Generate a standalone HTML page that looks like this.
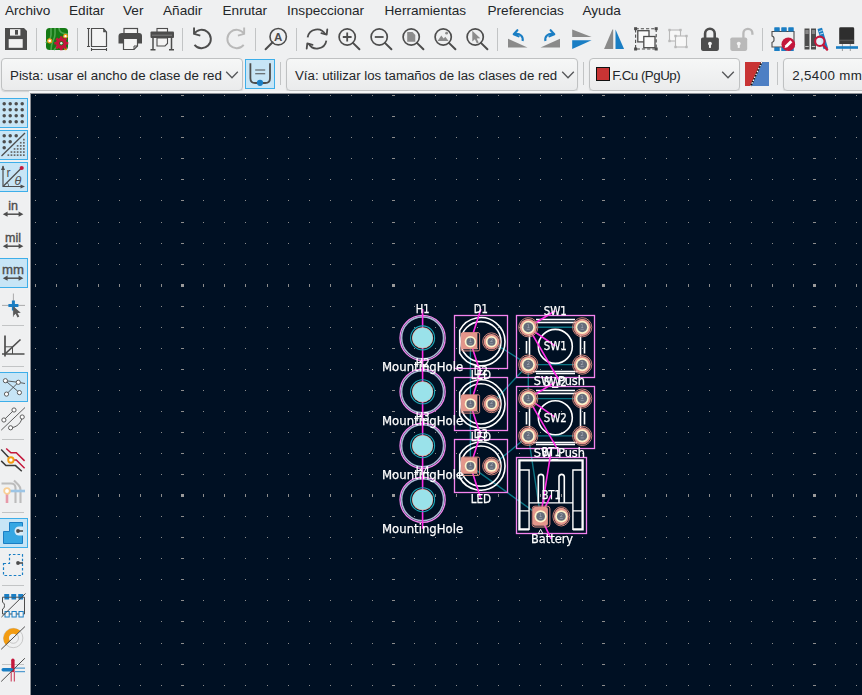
<!DOCTYPE html>
<html><head><meta charset="utf-8"><title>Editor de placas</title>
<style>

html,body{margin:0;padding:0}
body{width:862px;height:695px;overflow:hidden;background:#eff0f1;position:relative;font-family:"Liberation Sans",sans-serif;color:#232629}
#canvas{position:absolute;left:31px;top:94px;width:831px;height:601px;overflow:hidden;background:#001023}
.m{position:absolute;top:1.8px;height:18px;line-height:18px;font-size:13.6px;white-space:nowrap}
.ic{position:absolute;width:24px;height:24px;overflow:visible}
.sep{position:absolute;width:1px;background:#c2c4c5}
.hsep{position:absolute;height:1px;background:#c2c4c5;left:2px;width:22px}
.cb{position:absolute;top:58px;height:33px;box-sizing:border-box;border:1px solid #bfc1c2;border-radius:4px;background:linear-gradient(#f6f7f7,#eaebec);box-shadow:0 1px 1px rgba(0,0,0,.12);font-size:13.33px;line-height:30px;white-space:nowrap;overflow:hidden}
.cb span{position:absolute;top:1.7px}
.chev{position:absolute;top:11px;width:14px;height:10px}
.tg{position:absolute;box-sizing:border-box;border:1px solid #3daee9;background:#c7e5f6}

</style></head>
<body>
<span class="m" style="left:5px">Archivo</span>
<span class="m" style="left:69px">Editar</span>
<span class="m" style="left:123px">Ver</span>
<span class="m" style="left:163px">Añadir</span>
<span class="m" style="left:222.5px">Enrutar</span>
<span class="m" style="left:287px">Inspeccionar</span>
<span class="m" style="left:384.5px">Herramientas</span>
<span class="m" style="left:487.5px">Preferencias</span>
<span class="m" style="left:582.5px">Ayuda</span>
<svg class="ic" style="left:4px;top:27px" viewBox="0 0 24 24"><path d="M1 1H20L23 4V23H1Z" fill="#4d4d4d"/><rect x="6" y="2.2" width="10.4" height="6.4" fill="#f2f2f2"/><rect x="11" y="3" width="3" height="4.7" fill="#4d4d4d"/><rect x="4.7" y="12.1" width="14" height="8.7" fill="#f2f2f2"/></svg>
<svg class="ic" style="left:45px;top:27px" viewBox="0 0 24 24"><rect x="1" y="1" width="22" height="22" rx="3.5" fill="#157a15"/><path d="M6 1v7c0 5-3 5-5 8M10 1v6c0 6-4 7-4 16M14 1c0 5 5 6 9 6M9 23l5-6" stroke="#4da64d" stroke-width="1.6" fill="none"/><circle cx="4.7" cy="13.8" r="2" fill="#fff" stroke="#f39c12" stroke-width="1.2"/><circle cx="20.5" cy="9.2" r="1.8" fill="#fff" stroke="#f39c12" stroke-width="1.2"/><circle cx="20.5" cy="22" r="1.3" fill="#f39c12"/><g transform="translate(16.3 16.3)"><circle r="4.1" fill="none" stroke="#c4173b" stroke-width="2.7"/><path d="M0-7V7M-7 0H7M-5-5L5 5M-5 5L5-5" stroke="#c4173b" stroke-width="2.6"/><circle r="2.1" fill="#157a15"/><circle r="1.2" fill="#e8f4e8"/></g></svg>
<svg class="ic" style="left:86px;top:27px" viewBox="0 0 24 24"><path d="M5.5 1.5H17.5L20.5 5V19.5H5.5Z" fill="#f4f4f4" stroke="#4d4d4d" stroke-width="1.2"/><path d="M17.2 1.5V5.2H20.5Z" fill="#4d4d4d"/><path d="M2.5 1.5V19.5M1 1.5H4M1 19.5H4M5.5 22.5H20.5M5.5 21V24M20.5 21V24" stroke="#4d4d4d" stroke-width="1.1" fill="none"/></svg>
<svg class="ic" style="left:118px;top:27px" viewBox="0 0 24 24"><rect x="6" y="1.5" width="13.5" height="6" fill="#f4f4f4" stroke="#4d4d4d" stroke-width="1.2"/><path d="M4 6H21Q24 6 24 9V16.5H0.5V9Q0.5 6 4 6Z" fill="#4d4d4d"/><path d="M5.5 11.5H19.5V19L16 22.5H5.5Z" fill="#f4f4f4" stroke="#4d4d4d" stroke-width="1.2"/><path d="M16 22.5V19H19.5" fill="none" stroke="#4d4d4d" stroke-width="1"/></svg>
<svg class="ic" style="left:150px;top:27px" viewBox="0 0 24 24"><rect x="7" y="1.5" width="10.5" height="4" fill="#f4f4f4" stroke="#4d4d4d" stroke-width="1.1"/><rect x="0.5" y="4.5" width="23.5" height="6.5" rx="1" fill="#4d4d4d"/><path d="M2 8.2H22" stroke="#8a8a8a" stroke-width="0.8"/><path d="M7 11V19H15L17.5 16.5V11Z" fill="#f4f4f4" stroke="#4d4d4d" stroke-width="1.1"/><path d="M3 11V22.5M21.5 11V22.5M0.5 22.7H5.5M19 22.7H24" stroke="#4d4d4d" stroke-width="1.5" fill="none"/></svg>
<svg class="ic" style="left:191px;top:27px" viewBox="0 0 24 24"><g><path d="M3.05 6.8A9.2 9.2 0 1 1 3.5 17.8" fill="none" stroke="#4d4d4d" stroke-width="1.9"/><path d="M3.05 0.5V6.9L9.3 8.7" fill="none" stroke="#4d4d4d" stroke-width="1.9" stroke-linejoin="miter"/></g></svg>
<svg class="ic" style="left:223px;top:27px" viewBox="0 0 24 24"><g transform="translate(24.2 0) scale(-1 1)"><path d="M3.05 6.8A9.2 9.2 0 1 1 3.5 17.8" fill="none" stroke="#b9b9b9" stroke-width="1.9"/><path d="M3.05 0.5V6.9L9.3 8.7" fill="none" stroke="#b9b9b9" stroke-width="1.9" stroke-linejoin="miter"/></g></svg>
<svg class="ic" style="left:264px;top:27px" viewBox="0 0 24 24"><circle cx="14.2" cy="9.7" r="8.2" fill="none" stroke="#4d4d4d" stroke-width="1.6"/><path d="M8.6 15.2L1.6 22.2" stroke="#4d4d4d" stroke-width="2" stroke-linecap="round"/><text x="14.2" y="13.6" text-anchor="middle" font-family="Liberation Sans,sans-serif" font-weight="bold" font-size="11.5" fill="#4d4d4d">A</text></svg>
<svg class="ic" style="left:305px;top:27px" viewBox="0 0 24 24"><path d="M2.64 10.35A9.5 9.5 0 0 1 20.4 7.5M21.36 13.65A9.5 9.5 0 0 1 3.6 16.5" fill="none" stroke="#4d4d4d" stroke-width="1.8"/><path d="M22.3 2.4L21.7 7.7L16.4 6.2M1.7 21.6L2.3 16.3L7.6 17.8" fill="none" stroke="#4d4d4d" stroke-width="1.8" stroke-linecap="round" stroke-linejoin="round"/></svg>
<svg class="ic" style="left:337px;top:27px" viewBox="0 0 24 24"><circle cx="10.2" cy="10" r="8.1" fill="none" stroke="#4d4d4d" stroke-width="1.7"/><path d="M15.9 15.9L22.4 22.3" stroke="#4d4d4d" stroke-width="2" stroke-linecap="round"/><path d="M5.8 10H14.6M10.2 5.6V14.4" stroke="#4d4d4d" stroke-width="1.8"/></svg>
<svg class="ic" style="left:369px;top:27px" viewBox="0 0 24 24"><circle cx="10.2" cy="10" r="8.1" fill="none" stroke="#4d4d4d" stroke-width="1.7"/><path d="M15.9 15.9L22.4 22.3" stroke="#4d4d4d" stroke-width="2" stroke-linecap="round"/><path d="M5.8 10H14.6" stroke="#4d4d4d" stroke-width="1.8"/></svg>
<svg class="ic" style="left:401px;top:27px" viewBox="0 0 24 24"><circle cx="10.2" cy="10" r="8.1" fill="none" stroke="#4d4d4d" stroke-width="1.7"/><path d="M15.9 15.9L22.4 22.3" stroke="#4d4d4d" stroke-width="2" stroke-linecap="round"/><path d="M6.2 5H11.5L14.3 8V14.8H6.2Z" fill="#8c8c8c"/></svg>
<svg class="ic" style="left:433px;top:27px" viewBox="0 0 24 24"><circle cx="10.2" cy="10" r="8.1" fill="none" stroke="#4d4d4d" stroke-width="1.7"/><path d="M15.9 15.9L22.4 22.3" stroke="#4d4d4d" stroke-width="2" stroke-linecap="round"/><path d="M4.5 14L8.3 8.6L10.6 11.6L12.3 9.8L15.6 14Z" fill="#8c8c8c"/><circle cx="13.6" cy="6.2" r="1.4" fill="#8c8c8c"/></svg>
<svg class="ic" style="left:465px;top:27px" viewBox="0 0 24 24"><circle cx="10.2" cy="10" r="8.1" fill="none" stroke="#4d4d4d" stroke-width="1.7"/><path d="M15.9 15.9L22.4 22.3" stroke="#4d4d4d" stroke-width="2" stroke-linecap="round"/><path d="M7.3 3.8V14.6L9.9 12.2L11.9 16.4L13.7 15.5L11.7 11.5L15.3 11.3Z" fill="#8c8c8c"/></svg>
<svg class="ic" style="left:506px;top:27px" viewBox="0 0 24 24"><path d="M2 11.7L21.5 20.6H2Z" fill="#8a8a8a"/><path d="M16.6 14C17.6 9.4 14 6.1 9 7" fill="none" stroke="#1a7ec4" stroke-width="2.1"/><path d="M11.4 3.2L7.7 7.3L12.6 9.400" fill="none" stroke="#1a7ec4" stroke-width="2.1" stroke-linecap="round" stroke-linejoin="round"/></svg>
<svg class="ic" style="left:538px;top:27px" viewBox="0 0 24 24"><path d="M22 11.7L2.5 20.6H22Z" fill="#8a8a8a"/><path d="M7.4 14C6.4 9.4 10 6.1 15 7" fill="none" stroke="#1a7ec4" stroke-width="2.1"/><path d="M12.6 3.2L16.3 7.3L11.4 9.400" fill="none" stroke="#1a7ec4" stroke-width="2.1" stroke-linecap="round" stroke-linejoin="round"/></svg>
<svg class="ic" style="left:570px;top:27px" viewBox="0 0 24 24"><path d="M2.2 2.4L21.6 10.05H2.2Z" fill="#8a8a8a"/><path d="M2.2 13.3H21.6L2.2 21.9Z" fill="#1a7ec4"/></svg>
<svg class="ic" style="left:602px;top:27px" viewBox="0 0 24 24"><path d="M10.4 2.4H11.200V21.900H2.100Z" fill="#8a8a8a"/><path d="M13.500 2.400L22.100 21.900H13.500Z" fill="#1a7ec4"/></svg>
<svg class="ic" style="left:634px;top:27px" viewBox="0 0 24 24"><rect x="1.6" y="1.7" width="20.6" height="20.3" fill="none" stroke="#4d4d4d" stroke-width="1.1" stroke-dasharray="3.2 2"/><rect x="0.1" y="0.2" width="3" height="3" fill="#4d4d4d"/><rect x="0.1" y="20.5" width="3" height="3" fill="#4d4d4d"/><rect x="20.7" y="0.2" width="3" height="3" fill="#4d4d4d"/><rect x="20.7" y="20.5" width="3" height="3" fill="#4d4d4d"/><rect x="3.8" y="3.7" width="11.2" height="11.2" fill="#fafafa" stroke="#4d4d4d" stroke-width="1.3"/><rect x="9.8" y="9.5" width="11.2" height="11.2" fill="#fafafa" stroke="#4d4d4d" stroke-width="1.3"/></svg>
<svg class="ic" style="left:666px;top:27px" viewBox="0 0 24 24"><rect x="3.5" y="3" width="11" height="11" fill="#f7f7f7" stroke="#b9b9b9" stroke-width="1.1"/><rect x="9.5" y="9" width="11" height="11" fill="#f7f7f7" stroke="#b9b9b9" stroke-width="1.1"/><rect x="2.3" y="1.8" width="2.4" height="2.4" fill="#b9b9b9"/><rect x="13.3" y="1.8" width="2.4" height="2.4" fill="#b9b9b9"/><rect x="2.3" y="12.8" width="2.4" height="2.4" fill="#b9b9b9"/><rect x="8.3" y="7.8" width="2.4" height="2.4" fill="#b9b9b9"/><rect x="19.3" y="7.8" width="2.4" height="2.4" fill="#b9b9b9"/><rect x="8.3" y="18.8" width="2.4" height="2.4" fill="#b9b9b9"/><rect x="19.3" y="18.8" width="2.4" height="2.4" fill="#b9b9b9"/></svg>
<svg class="ic" style="left:698px;top:27px" viewBox="0 0 24 24"><path d="M7.1 11V6.6A4.8 4.8 0 0 1 16.7 6.600V11" fill="none" stroke="#4d4d4d" stroke-width="2.6"/><rect x="3" y="10.5" width="17.9" height="13.4" rx="1.8" fill="#4d4d4d"/><circle cx="11.95" cy="16.6" r="1.9" fill="#f4f4f4"/><rect x="10.95" y="16.6" width="2" height="4.3" fill="#f4f4f4"/></svg>
<svg class="ic" style="left:730px;top:27px" viewBox="0 0 24 24"><path d="M13.4 11V6.3A4.500 4.500 0 0 1 22.400 6.300V7.700" fill="none" stroke="#b9b9b9" stroke-width="2.3"/><rect x="0.3" y="10.5" width="16.9" height="13.4" rx="1.8" fill="#b9b9b9"/><circle cx="8.75" cy="16.6" r="1.9" fill="#f4f4f4"/><rect x="7.75" y="16.6" width="2" height="4.3" fill="#f4f4f4"/></svg>
<svg class="ic" style="left:771px;top:27px" viewBox="0 0 24 24"><rect x="3.5" y="0.5" width="5" height="6.5" fill="#1a7ec4"/><rect x="3.5" y="17.5" width="5" height="6.5" fill="#1a7ec4"/><rect x="10.5" y="0.5" width="5" height="6.5" fill="#1a7ec4"/><rect x="10.5" y="17.5" width="5" height="6.5" fill="#1a7ec4"/><rect x="17.5" y="0.5" width="5" height="6.5" fill="#1a7ec4"/><rect x="17.5" y="17.5" width="5" height="6.5" fill="#1a7ec4"/><path d="M1 4.5H23V20H1V15.5Q3.4 14.8 3 12.2Q3.4 9.7 1 9Z" fill="#eff0f1" stroke="#4d4d4d" stroke-width="1.1"/><rect x="3.5" y="0.5" width="5" height="4" fill="#1a7ec4"/><rect x="3.5" y="20.5" width="5" height="3.5" fill="#1a7ec4"/><rect x="10.5" y="0.5" width="5" height="4" fill="#1a7ec4"/><rect x="10.5" y="20.5" width="5" height="3.5" fill="#1a7ec4"/><rect x="17.5" y="0.5" width="5" height="4" fill="#1a7ec4"/><rect x="17.5" y="20.5" width="5" height="3.5" fill="#1a7ec4"/><circle cx="17.3" cy="17.2" r="6.8" fill="#c4173b"/><path d="M13.6 21L14.3 18.2L19.3 13.2L21.4 15.3L16.4 20.3Z" fill="#fff"/></svg>
<svg class="ic" style="left:803px;top:27px" viewBox="0 0 24 24"><rect x="1.5" y="1.5" width="5" height="21" fill="#4d4d4d"/><rect x="8" y="1.5" width="5" height="21" fill="#4d4d4d"/><path d="M2.3 4H5.7M2.3 6H5.7M2.3 19.5H5.7M8.8 4H12.2M8.8 6H12.2M8.8 19.5H12.2" stroke="#cfcfcf" stroke-width="0.9"/><path d="M14.5 2L19 0.8L25 21L20.5 22.2Z" fill="#1a7ec4"/><path d="M16 4.5L19.5 3.5M16.8 7.2L20.3 6.2" stroke="#cfe6f7" stroke-width="0.9"/><circle cx="16.8" cy="14.3" r="4.7" fill="#e4f1fa" fill-opacity="0.9" stroke="#c4173b" stroke-width="2.1"/><path d="M20.3 18L24 22.4" stroke="#c4173b" stroke-width="2.6" stroke-linecap="round"/></svg>
<svg class="ic" style="left:835px;top:27px" viewBox="0 0 24 24"><path d="M5.500 0.300H17.800Q19.200 0.300 19.200 1.700V13H4.200V1.700Q4.200 0.300 5.500 0.300Z" fill="#2e2e2e"/><path d="M4.200 13H19.200V17H4.200Z" fill="#3c3c3c"/><path d="M4.200 13.200H19.200" stroke="#6a6a6a" stroke-width="0.7"/><path d="M7.400 17V24M15.300 17V24" stroke="#9a9a9a" stroke-width="1"/><rect x="1" y="19.2" width="22" height="2.600" fill="#1a7ec4"/></svg>
<div class="sep" style="left:36px;top:28px;height:23px"></div>
<div class="sep" style="left:77px;top:28px;height:23px"></div>
<div class="sep" style="left:182px;top:28px;height:23px"></div>
<div class="sep" style="left:255px;top:28px;height:23px"></div>
<div class="sep" style="left:296px;top:28px;height:23px"></div>
<div class="sep" style="left:497px;top:28px;height:23px"></div>
<div class="sep" style="left:762px;top:28px;height:23px"></div>
<div class="cb" style="left:1px;width:242px"><span style="left:8px">Pista: usar el ancho de clase de red</span><svg class="chev" style="left:223.4px" viewBox="0 0 14 10"><path d="M1.2 1.8L7 7.8L12.8 1.8" fill="none" stroke="#555759" stroke-width="1.3"/></svg></div>
<div class="tg" style="left:245px;top:59px;width:30px;height:30px"></div>
<svg class="ic" style="left:248px;top:62px" viewBox="0 0 24 24"><path d="M2.4 1.3V16.200Q2.400 21 7.200 21H17.200Q22 21 22 16.200V1.300" fill="none" stroke="#4d4d4d" stroke-width="1.8"/><path d="M7.200 8H17.200M7.200 11.800H17.200" stroke="#4d4d4d" stroke-width="1.1"/><circle cx="12" cy="20.800" r="3.1" fill="#1a7ec4"/></svg>
<div class="sep" style="left:280px;top:62px;height:23px"></div>
<div class="cb" style="left:286px;width:292px"><span style="left:8px;font-size:13.25px">Vía: utilizar los tamaños de las clases de red</span><svg class="chev" style="left:274px" viewBox="0 0 14 10"><path d="M1.2 1.8L7 7.8L12.8 1.8" fill="none" stroke="#555759" stroke-width="1.3"/></svg></div>
<div class="sep" style="left:583px;top:62px;height:23px"></div>
<div class="cb" style="left:589px;width:151px"><div style="position:absolute;left:6px;top:8px;width:12px;height:12px;border:1px solid #111;background:#c83434"></div><span style="left:22.3px;letter-spacing:-0.5px">F.Cu (PgUp)</span><svg class="chev" style="left:131px" viewBox="0 0 14 10"><path d="M1.2 1.8L7 7.8L12.8 1.8" fill="none" stroke="#555759" stroke-width="1.3"/></svg></div>
<svg class="ic" style="left:745px;top:62px" viewBox="0 0 24 24"><rect width="24" height="24" fill="#4d7fc4"/><path d="M0 0H17L6 24H0Z" fill="#c83434"/><path d="M16.8 0L5.8 24" stroke="#111" stroke-width="1.6"/><path d="M16.800 0L5.800 24" stroke="#fff" stroke-width="1.2" stroke-dasharray="1.6 1.6"/></svg>
<div class="sep" style="left:777px;top:62px;height:23px"></div>
<div class="cb" style="left:783px;width:100px"><span style="left:8.3px;letter-spacing:0.35px">2,5400 mm</span></div>
<div style="position:absolute;left:29px;top:91px;width:833px;height:2px;background:#f4f5f6"></div><div style="position:absolute;left:30px;top:93px;width:832px;height:1px;background:#8d9096"></div>
<div class="tg" style="left:-1px;top:98px;width:29px;height:30px"></div>
<div class="tg" style="left:-1px;top:130px;width:29px;height:30px"></div>
<div class="tg" style="left:-1px;top:162px;width:29px;height:30px"></div>
<div class="tg" style="left:-1px;top:258px;width:29px;height:30px"></div>
<div class="tg" style="left:-1px;top:372px;width:29px;height:30px"></div>
<div class="tg" style="left:-1px;top:518px;width:29px;height:30px"></div>
<div class="hsep" style="top:325px"></div>
<div class="hsep" style="top:366px"></div>
<div class="hsep" style="top:439px"></div>
<div class="hsep" style="top:512px"></div>
<div class="hsep" style="top:585px"></div>
<div class="hsep" style="top:664px"></div>
<svg class="ic" style="left:1px;top:101px" viewBox="0 0 24 24"><circle cx="3.2" cy="2.7" r="1.75" fill="#4d4d4d"/><circle cx="3.2" cy="8.8" r="1.75" fill="#4d4d4d"/><circle cx="3.2" cy="14.8" r="1.75" fill="#4d4d4d"/><circle cx="3.2" cy="20.8" r="1.75" fill="#4d4d4d"/><circle cx="9.2" cy="2.7" r="1.75" fill="#4d4d4d"/><circle cx="9.2" cy="8.8" r="1.75" fill="#4d4d4d"/><circle cx="9.2" cy="14.8" r="1.75" fill="#4d4d4d"/><circle cx="9.2" cy="20.8" r="1.75" fill="#4d4d4d"/><circle cx="15.2" cy="2.7" r="1.75" fill="#4d4d4d"/><circle cx="15.2" cy="8.8" r="1.75" fill="#4d4d4d"/><circle cx="15.2" cy="14.8" r="1.75" fill="#4d4d4d"/><circle cx="15.2" cy="20.8" r="1.75" fill="#4d4d4d"/><circle cx="21.2" cy="2.7" r="1.75" fill="#4d4d4d"/><circle cx="21.2" cy="8.8" r="1.75" fill="#4d4d4d"/><circle cx="21.2" cy="14.8" r="1.75" fill="#4d4d4d"/><circle cx="21.2" cy="20.8" r="1.75" fill="#4d4d4d"/></svg>
<svg class="ic" style="left:1px;top:133px" viewBox="0 0 24 24"><circle cx="3.2" cy="2.7" r="1.75" fill="#4d4d4d"/><circle cx="9.2" cy="2.7" r="1.75" fill="#4d4d4d"/><circle cx="15.2" cy="2.7" r="1.75" fill="#4d4d4d"/><circle cx="3.2" cy="8.8" r="1.75" fill="#4d4d4d"/><circle cx="9.2" cy="8.8" r="1.75" fill="#4d4d4d"/><circle cx="3.2" cy="14.8" r="1.75" fill="#4d4d4d"/><path d="M0.5 23L24 0" stroke="#4d4d4d" stroke-width="1.3"/><rect x="6.5" y="21.3" width="1.7" height="1.7" fill="#666"/><rect x="9.6" y="18.2" width="1.7" height="1.7" fill="#666"/><rect x="9.6" y="21.3" width="1.7" height="1.7" fill="#666"/><rect x="12.7" y="15.1" width="1.7" height="1.7" fill="#666"/><rect x="12.7" y="18.2" width="1.7" height="1.7" fill="#666"/><rect x="12.7" y="21.3" width="1.7" height="1.7" fill="#666"/><rect x="15.8" y="12.0" width="1.7" height="1.7" fill="#666"/><rect x="15.8" y="15.1" width="1.7" height="1.7" fill="#666"/><rect x="15.8" y="18.2" width="1.7" height="1.7" fill="#666"/><rect x="15.8" y="21.3" width="1.7" height="1.7" fill="#666"/><rect x="18.9" y="8.9" width="1.7" height="1.7" fill="#666"/><rect x="18.9" y="12.0" width="1.7" height="1.7" fill="#666"/><rect x="18.9" y="15.1" width="1.7" height="1.7" fill="#666"/><rect x="18.9" y="18.2" width="1.7" height="1.7" fill="#666"/><rect x="18.9" y="21.3" width="1.7" height="1.7" fill="#666"/><rect x="22.0" y="5.8" width="1.7" height="1.7" fill="#666"/><rect x="22.0" y="8.9" width="1.7" height="1.7" fill="#666"/><rect x="22.0" y="12.0" width="1.7" height="1.7" fill="#666"/><rect x="22.0" y="15.1" width="1.7" height="1.7" fill="#666"/><rect x="22.0" y="18.2" width="1.7" height="1.7" fill="#666"/><rect x="22.0" y="21.3" width="1.7" height="1.7" fill="#666"/></svg>
<svg class="ic" style="left:1px;top:165px" viewBox="0 0 24 24"><path d="M2 1V21.500H23" fill="none" stroke="#4d4d4d" stroke-width="1.2"/><path d="M0 5L2 0.5L4 5ZM19.500 19.500L24 21.500L19.500 23.500Z" fill="#4d4d4d"/><path d="M2.500 21L20 3.500" stroke="#4d4d4d" stroke-width="1.2"/><path d="M6 17.500Q8 19 7.500 21.500" fill="none" stroke="#4d4d4d" stroke-width="0.8"/><circle cx="20.700" cy="3" r="2.1" fill="#c4173b"/><text x="5.500" y="11.500" font-family="Liberation Sans,sans-serif" font-size="12" fill="#4d4d4d">r</text><text x="13.500" y="20" font-family="Liberation Sans,sans-serif" font-style="italic" font-size="12.500" fill="#4d4d4d">θ</text></svg>
<svg class="ic" style="left:1px;top:197px" viewBox="0 0 24 24"><text x="12" y="12.800" text-anchor="middle" font-family="Liberation Sans,sans-serif" font-size="12.5" fill="#4d4d4d" stroke="#4d4d4d" stroke-width="0.35">in</text><path d="M4.500 17.200H19.800" stroke="#4d4d4d" stroke-width="1.5"/><path d="M1.800 17.200L6.600 14.600V19.800ZM22.400 17.200L17.600 14.600V19.800Z" fill="#4d4d4d"/></svg>
<svg class="ic" style="left:1px;top:229px" viewBox="0 0 24 24"><text x="12" y="12.800" text-anchor="middle" font-family="Liberation Sans,sans-serif" font-size="12.5" fill="#4d4d4d" stroke="#4d4d4d" stroke-width="0.35">mil</text><path d="M4.500 17.200H19.800" stroke="#4d4d4d" stroke-width="1.5"/><path d="M1.800 17.200L6.600 14.600V19.800ZM22.400 17.200L17.600 14.600V19.800Z" fill="#4d4d4d"/></svg>
<svg class="ic" style="left:1px;top:261px" viewBox="0 0 24 24"><text x="12" y="12.800" text-anchor="middle" font-family="Liberation Sans,sans-serif" font-size="13.2" fill="#4d4d4d" stroke="#4d4d4d" stroke-width="0.35">mm</text><path d="M4.500 17.200H19.800" stroke="#4d4d4d" stroke-width="1.5"/><path d="M1.800 17.200L6.600 14.600V19.800ZM22.400 17.200L17.600 14.600V19.800Z" fill="#4d4d4d"/></svg>
<svg class="ic" style="left:2px;top:293px" viewBox="0 0 24 24"><path d="M11.400 0.500V24M0 12.400H23" stroke="#8c8c8c" stroke-width="0.7"/><path d="M11.400 7.400V17.400M6.400 12.400H16.400" stroke="#1a7ec4" stroke-width="3"/><path d="M11.200 13.200V23L13.700 20.800L15.500 24.500L17.300 23.600L15.500 20L18.800 19.800Z" fill="#5a5a5a"/></svg>
<svg class="ic" style="left:2px;top:335px" viewBox="0 0 24 24"><path d="M3 0.500V21.500M0 19H22.500" stroke="#4d4d4d" stroke-width="1.7" fill="none"/><path d="M3 19L18.500 4.500" stroke="#4d4d4d" stroke-width="1.7"/><path d="M3 11.800H10.500V19" fill="none" stroke="#4d4d4d" stroke-width="1"/></svg>
<svg class="ic" style="left:2px;top:375px" viewBox="0 0 24 24"><path d="M3.400 5.700L17.400 17.600M4.500 19.100L16.300 7.300M3.400 5.700L16.300 7.300L23 8.500" stroke="#4d4d4d" stroke-width="0.9" fill="none"/><circle cx="3.4" cy="5.7" r="2.1" fill="#fff" stroke="#4d4d4d" stroke-width="0.9"/><circle cx="16.3" cy="7.3" r="2.1" fill="#fff" stroke="#4d4d4d" stroke-width="0.9"/><circle cx="4.5" cy="19.1" r="2.1" fill="#fff" stroke="#4d4d4d" stroke-width="0.9"/><circle cx="17.4" cy="17.6" r="2.1" fill="#fff" stroke="#4d4d4d" stroke-width="0.9"/></svg>
<svg class="ic" style="left:2px;top:407px" viewBox="0 0 24 24"><path d="M-0.800 23.200L23 0.500" stroke="#4d4d4d" stroke-width="0.9"/><path d="M1.900 13L12 3" stroke="#4d4d4d" stroke-width="0.9"/><path d="M8.600 20.800C15 20.500 19.500 15.500 20.200 10" fill="none" stroke="#4d4d4d" stroke-width="0.9"/><circle cx="12" cy="3" r="2.1" fill="#fff" stroke="#4d4d4d" stroke-width="0.9"/><circle cx="1.9" cy="13" r="2.1" fill="#fff" stroke="#4d4d4d" stroke-width="0.9"/><circle cx="20.2" cy="10" r="2.1" fill="#fff" stroke="#4d4d4d" stroke-width="0.9"/><circle cx="8.6" cy="20.8" r="2.1" fill="#fff" stroke="#4d4d4d" stroke-width="0.9"/></svg>
<svg class="ic" style="left:2px;top:447px" viewBox="0 0 24 24"><path d="M4.200 1.500L8.900 5.700H14.300L22.600 13.900" fill="none" stroke="#c4173b" stroke-width="1.500"/><path d="M10 13H14.300L22.600 21.200" fill="none" stroke="#c4173b" stroke-width="1.500"/><path d="M-0.800 2.600L7 10.800M-0.800 13.900L3.900 18.600H13.500L19.800 24.300" fill="none" stroke="#3a3a3a" stroke-width="1.500"/><circle cx="8.900" cy="13" r="2.700" fill="#fff" stroke="#f39c12" stroke-width="1.900"/></svg>
<svg class="ic" style="left:2px;top:480px" viewBox="0 0 24 24"><path d="M-0.500 3.500H9Q13.500 3.500 13.500 8V23M12 0.500L16.500 5Q18.500 7 18.500 10V23" fill="none" stroke="#bcbcbc" stroke-width="2.1"/><path d="M5 11H23" stroke="#9cc5e6" stroke-width="2.600"/><path d="M5 11V23" stroke="#e79aa9" stroke-width="2.600"/><circle cx="5" cy="11" r="2.800" fill="#fff" stroke="#f9cf95" stroke-width="1.800"/></svg>
<svg class="ic" style="left:2px;top:521px" viewBox="0 0 24 24"><path d="M1.500 10.500H7.500V1.500H20.500V22.500H1.500Z" fill="#36a7e3" stroke="#1a7ec4" stroke-width="1"/><path d="M21 5.500H17A4.500 4.500 0 0 0 17 14.500H21Z" fill="#d9ecf8"/><circle cx="16" cy="10" r="1.900" fill="#4d4d4d"/><path d="M16 10H21" stroke="#4d4d4d" stroke-width="1.600"/></svg>
<svg class="ic" style="left:2px;top:553px" viewBox="0 0 24 24"><path d="M1.500 10.500H7.500V1.500H20.500V22.500H1.500Z" fill="none" stroke="#1a7ec4" stroke-width="1.200" stroke-dasharray="2.600 2"/><circle cx="16" cy="10" r="1.900" fill="#4d4d4d"/><path d="M16 10H21" stroke="#4d4d4d" stroke-width="1.600"/></svg>
<svg class="ic" style="left:2px;top:593px" viewBox="0 0 24 24"><rect x="2.5" y="1" width="4.600" height="5.500" fill="#1a7ec4"/><rect x="9.5" y="1" width="4.600" height="5.500" fill="#1a7ec4"/><rect x="16.5" y="1" width="4.600" height="5.500" fill="#1a7ec4"/><path d="M0.500 4.200H22.500V21H0.500V16Q2.800 15.300 2.500 12.600Q2.800 10 0.500 9.300Z" fill="none" stroke="#4d4d4d" stroke-width="1"/><rect x="2.5" y="1" width="4.600" height="3.200" fill="#1a7ec4"/><rect x="9.5" y="1" width="4.600" height="3.200" fill="#1a7ec4"/><rect x="16.5" y="1" width="4.600" height="3.200" fill="#1a7ec4"/><rect x="3" y="18.500" width="4.200" height="5.500" fill="#f4f4f4" stroke="#1a7ec4" stroke-width="1"/><rect x="10" y="18.500" width="4.200" height="5.500" fill="#f4f4f4" stroke="#1a7ec4" stroke-width="1"/><rect x="17" y="18.500" width="4.200" height="5.500" fill="#f4f4f4" stroke="#1a7ec4" stroke-width="1"/><path d="M-0.500 24L23.500 0.500" stroke="#4d4d4d" stroke-width="1"/></svg>
<svg class="ic" style="left:2px;top:627px" viewBox="0 0 24 24"><circle cx="11.200" cy="11" r="9.700" fill="none" stroke="#bdbdbd" stroke-width="0.800"/><circle cx="11.200" cy="11" r="5.300" fill="none" stroke="#bdbdbd" stroke-width="0.800"/><path d="M18.400 3.800A10.200 10.200 0 0 0 4 18.200L8.200 14A4.200 4.200 0 0 1 14.200 8Z" fill="#f39c12"/><path d="M-0.800 22.300L22.900 -0.400" stroke="#4d4d4d" stroke-width="1"/></svg>
<svg class="ic" style="left:2px;top:658px" viewBox="0 0 24 24"><path d="M9.200 13.500V23.500M12.300 13.500V23.500" stroke="#c4173b" stroke-width="0.900"/><path d="M12.800 10.100H23M12.800 13.700H23" stroke="#1a7ec4" stroke-width="0.900"/><path d="M10.900 2.300V12.500" stroke="#c4173b" stroke-width="3.400" stroke-linecap="round"/><path d="M1.200 11.800H9.500" stroke="#1a7ec4" stroke-width="3.400" stroke-linecap="round"/><path d="M-0.800 23.500L22.900 0.200" stroke="#4d4d4d" stroke-width="1"/></svg>
<div style="position:absolute;left:29px;top:92px;width:1px;height:603px;background:#f4f5f6"></div><div style="position:absolute;left:30px;top:93px;width:1px;height:602px;background:#8d9096"></div>
<div id="canvas"><svg width="862" height="695" viewBox="0 0 862 695" style="position:absolute;left:-31px;top:-94px;will-change:transform">
<rect x="181" y="284" width="3" height="3" fill="#9a9a9a"/>
<rect x="392" y="284" width="3" height="3" fill="#9a9a9a"/>
<rect x="602" y="284" width="3" height="3" fill="#9a9a9a"/>
<rect x="813" y="284" width="3" height="3" fill="#9a9a9a"/>
<rect x="181" y="494" width="3" height="3" fill="#9a9a9a"/>
<rect x="392" y="494" width="3" height="3" fill="#9a9a9a"/>
<rect x="602" y="494" width="3" height="3" fill="#9a9a9a"/>
<rect x="813" y="494" width="3" height="3" fill="#9a9a9a"/>
<path d="M35 95.5h1M56 95.5h1M77 95.5h1M98 95.5h1M119 95.5h1M140 95.5h1M161 95.5h1M181 95.5h3M203 95.5h1M224 95.5h1M245 95.5h1M267 95.5h1M288 95.5h1M309 95.5h1M330 95.5h1M351 95.5h1M372 95.5h1M392 95.5h3M414 95.5h1M435 95.5h1M456 95.5h1M477 95.5h1M498 95.5h1M519 95.5h1M540 95.5h1M561 95.5h1M582 95.5h1M602 95.5h3M624 95.5h1M645 95.5h1M666 95.5h1M688 95.5h1M709 95.5h1M730 95.5h1M751 95.5h1M772 95.5h1M793 95.5h1M813 95.5h3M835 95.5h1M856 95.5h1M35 116.5h1M56 116.5h1M77 116.5h1M98 116.5h1M119 116.5h1M140 116.5h1M161 116.5h1M181 116.5h3M203 116.5h1M224 116.5h1M245 116.5h1M267 116.5h1M288 116.5h1M309 116.5h1M330 116.5h1M351 116.5h1M372 116.5h1M392 116.5h3M414 116.5h1M435 116.5h1M456 116.5h1M477 116.5h1M498 116.5h1M519 116.5h1M540 116.5h1M561 116.5h1M582 116.5h1M602 116.5h3M624 116.5h1M645 116.5h1M666 116.5h1M688 116.5h1M709 116.5h1M730 116.5h1M751 116.5h1M772 116.5h1M793 116.5h1M813 116.5h3M835 116.5h1M856 116.5h1M35 137.5h1M56 137.5h1M77 137.5h1M98 137.5h1M119 137.5h1M140 137.5h1M161 137.5h1M181 137.5h3M203 137.5h1M224 137.5h1M245 137.5h1M267 137.5h1M288 137.5h1M309 137.5h1M330 137.5h1M351 137.5h1M372 137.5h1M392 137.5h3M414 137.5h1M435 137.5h1M456 137.5h1M477 137.5h1M498 137.5h1M519 137.5h1M540 137.5h1M561 137.5h1M582 137.5h1M602 137.5h3M624 137.5h1M645 137.5h1M666 137.5h1M688 137.5h1M709 137.5h1M730 137.5h1M751 137.5h1M772 137.5h1M793 137.5h1M813 137.5h3M835 137.5h1M856 137.5h1M35 158.5h1M56 158.5h1M77 158.5h1M98 158.5h1M119 158.5h1M140 158.5h1M161 158.5h1M181 158.5h3M203 158.5h1M224 158.5h1M245 158.5h1M267 158.5h1M288 158.5h1M309 158.5h1M330 158.5h1M351 158.5h1M372 158.5h1M392 158.5h3M414 158.5h1M435 158.5h1M456 158.5h1M477 158.5h1M498 158.5h1M519 158.5h1M540 158.5h1M561 158.5h1M582 158.5h1M602 158.5h3M624 158.5h1M645 158.5h1M666 158.5h1M688 158.5h1M709 158.5h1M730 158.5h1M751 158.5h1M772 158.5h1M793 158.5h1M813 158.5h3M835 158.5h1M856 158.5h1M35 179.5h1M56 179.5h1M77 179.5h1M98 179.5h1M119 179.5h1M140 179.5h1M161 179.5h1M181 179.5h3M203 179.5h1M224 179.5h1M245 179.5h1M267 179.5h1M288 179.5h1M309 179.5h1M330 179.5h1M351 179.5h1M372 179.5h1M392 179.5h3M414 179.5h1M435 179.5h1M456 179.5h1M477 179.5h1M498 179.5h1M519 179.5h1M540 179.5h1M561 179.5h1M582 179.5h1M602 179.5h3M624 179.5h1M645 179.5h1M666 179.5h1M688 179.5h1M709 179.5h1M730 179.5h1M751 179.5h1M772 179.5h1M793 179.5h1M813 179.5h3M835 179.5h1M856 179.5h1M35 200.5h1M56 200.5h1M77 200.5h1M98 200.5h1M119 200.5h1M140 200.5h1M161 200.5h1M181 200.5h3M203 200.5h1M224 200.5h1M245 200.5h1M267 200.5h1M288 200.5h1M309 200.5h1M330 200.5h1M351 200.5h1M372 200.5h1M392 200.5h3M414 200.5h1M435 200.5h1M456 200.5h1M477 200.5h1M498 200.5h1M519 200.5h1M540 200.5h1M561 200.5h1M582 200.5h1M602 200.5h3M624 200.5h1M645 200.5h1M666 200.5h1M688 200.5h1M709 200.5h1M730 200.5h1M751 200.5h1M772 200.5h1M793 200.5h1M813 200.5h3M835 200.5h1M856 200.5h1M35 222.5h1M56 222.5h1M77 222.5h1M98 222.5h1M119 222.5h1M140 222.5h1M161 222.5h1M181 222.5h3M203 222.5h1M224 222.5h1M245 222.5h1M267 222.5h1M288 222.5h1M309 222.5h1M330 222.5h1M351 222.5h1M372 222.5h1M392 222.5h3M414 222.5h1M435 222.5h1M456 222.5h1M477 222.5h1M498 222.5h1M519 222.5h1M540 222.5h1M561 222.5h1M582 222.5h1M602 222.5h3M624 222.5h1M645 222.5h1M666 222.5h1M688 222.5h1M709 222.5h1M730 222.5h1M751 222.5h1M772 222.5h1M793 222.5h1M813 222.5h3M835 222.5h1M856 222.5h1M35 243.5h1M56 243.5h1M77 243.5h1M98 243.5h1M119 243.5h1M140 243.5h1M161 243.5h1M181 243.5h3M203 243.5h1M224 243.5h1M245 243.5h1M267 243.5h1M288 243.5h1M309 243.5h1M330 243.5h1M351 243.5h1M372 243.5h1M392 243.5h3M414 243.5h1M435 243.5h1M456 243.5h1M477 243.5h1M498 243.5h1M519 243.5h1M540 243.5h1M561 243.5h1M582 243.5h1M602 243.5h3M624 243.5h1M645 243.5h1M666 243.5h1M688 243.5h1M709 243.5h1M730 243.5h1M751 243.5h1M772 243.5h1M793 243.5h1M813 243.5h3M835 243.5h1M856 243.5h1M35 264.5h1M56 264.5h1M77 264.5h1M98 264.5h1M119 264.5h1M140 264.5h1M161 264.5h1M181 264.5h3M203 264.5h1M224 264.5h1M245 264.5h1M267 264.5h1M288 264.5h1M309 264.5h1M330 264.5h1M351 264.5h1M372 264.5h1M392 264.5h3M414 264.5h1M435 264.5h1M456 264.5h1M477 264.5h1M498 264.5h1M519 264.5h1M540 264.5h1M561 264.5h1M582 264.5h1M602 264.5h3M624 264.5h1M645 264.5h1M666 264.5h1M688 264.5h1M709 264.5h1M730 264.5h1M751 264.5h1M772 264.5h1M793 264.5h1M813 264.5h3M835 264.5h1M856 264.5h1M35.5 284v3M56.5 284v3M77.5 284v3M98.5 284v3M119.5 284v3M140.5 284v3M161.5 284v3M203.5 284v3M224.5 284v3M245.5 284v3M267.5 284v3M288.5 284v3M309.5 284v3M330.5 284v3M351.5 284v3M372.5 284v3M414.5 284v3M435.5 284v3M456.5 284v3M477.5 284v3M498.5 284v3M519.5 284v3M540.5 284v3M561.5 284v3M582.5 284v3M624.5 284v3M645.5 284v3M666.5 284v3M688.5 284v3M709.5 284v3M730.5 284v3M751.5 284v3M772.5 284v3M793.5 284v3M835.5 284v3M856.5 284v3M35 306.5h1M56 306.5h1M77 306.5h1M98 306.5h1M119 306.5h1M140 306.5h1M161 306.5h1M181 306.5h3M203 306.5h1M224 306.5h1M245 306.5h1M267 306.5h1M288 306.5h1M309 306.5h1M330 306.5h1M351 306.5h1M372 306.5h1M392 306.5h3M414 306.5h1M435 306.5h1M456 306.5h1M477 306.5h1M498 306.5h1M519 306.5h1M540 306.5h1M561 306.5h1M582 306.5h1M602 306.5h3M624 306.5h1M645 306.5h1M666 306.5h1M688 306.5h1M709 306.5h1M730 306.5h1M751 306.5h1M772 306.5h1M793 306.5h1M813 306.5h3M835 306.5h1M856 306.5h1M35 327.5h1M56 327.5h1M77 327.5h1M98 327.5h1M119 327.5h1M140 327.5h1M161 327.5h1M181 327.5h3M203 327.5h1M224 327.5h1M245 327.5h1M267 327.5h1M288 327.5h1M309 327.5h1M330 327.5h1M351 327.5h1M372 327.5h1M392 327.5h3M414 327.5h1M435 327.5h1M456 327.5h1M477 327.5h1M498 327.5h1M519 327.5h1M540 327.5h1M561 327.5h1M582 327.5h1M602 327.5h3M624 327.5h1M645 327.5h1M666 327.5h1M688 327.5h1M709 327.5h1M730 327.5h1M751 327.5h1M772 327.5h1M793 327.5h1M813 327.5h3M835 327.5h1M856 327.5h1M35 348.5h1M56 348.5h1M77 348.5h1M98 348.5h1M119 348.5h1M140 348.5h1M161 348.5h1M181 348.5h3M203 348.5h1M224 348.5h1M245 348.5h1M267 348.5h1M288 348.5h1M309 348.5h1M330 348.5h1M351 348.5h1M372 348.5h1M392 348.5h3M414 348.5h1M435 348.5h1M456 348.5h1M477 348.5h1M498 348.5h1M519 348.5h1M540 348.5h1M561 348.5h1M582 348.5h1M602 348.5h3M624 348.5h1M645 348.5h1M666 348.5h1M688 348.5h1M709 348.5h1M730 348.5h1M751 348.5h1M772 348.5h1M793 348.5h1M813 348.5h3M835 348.5h1M856 348.5h1M35 369.5h1M56 369.5h1M77 369.5h1M98 369.5h1M119 369.5h1M140 369.5h1M161 369.5h1M181 369.5h3M203 369.5h1M224 369.5h1M245 369.5h1M267 369.5h1M288 369.5h1M309 369.5h1M330 369.5h1M351 369.5h1M372 369.5h1M392 369.5h3M414 369.5h1M435 369.5h1M456 369.5h1M477 369.5h1M498 369.5h1M519 369.5h1M540 369.5h1M561 369.5h1M582 369.5h1M602 369.5h3M624 369.5h1M645 369.5h1M666 369.5h1M688 369.5h1M709 369.5h1M730 369.5h1M751 369.5h1M772 369.5h1M793 369.5h1M813 369.5h3M835 369.5h1M856 369.5h1M35 390.5h1M56 390.5h1M77 390.5h1M98 390.5h1M119 390.5h1M140 390.5h1M161 390.5h1M181 390.5h3M203 390.5h1M224 390.5h1M245 390.5h1M267 390.5h1M288 390.5h1M309 390.5h1M330 390.5h1M351 390.5h1M372 390.5h1M392 390.5h3M414 390.5h1M435 390.5h1M456 390.5h1M477 390.5h1M498 390.5h1M519 390.5h1M540 390.5h1M561 390.5h1M582 390.5h1M602 390.5h3M624 390.5h1M645 390.5h1M666 390.5h1M688 390.5h1M709 390.5h1M730 390.5h1M751 390.5h1M772 390.5h1M793 390.5h1M813 390.5h3M835 390.5h1M856 390.5h1M35 411.5h1M56 411.5h1M77 411.5h1M98 411.5h1M119 411.5h1M140 411.5h1M161 411.5h1M181 411.5h3M203 411.5h1M224 411.5h1M245 411.5h1M267 411.5h1M288 411.5h1M309 411.5h1M330 411.5h1M351 411.5h1M372 411.5h1M392 411.5h3M414 411.5h1M435 411.5h1M456 411.5h1M477 411.5h1M498 411.5h1M519 411.5h1M540 411.5h1M561 411.5h1M582 411.5h1M602 411.5h3M624 411.5h1M645 411.5h1M666 411.5h1M688 411.5h1M709 411.5h1M730 411.5h1M751 411.5h1M772 411.5h1M793 411.5h1M813 411.5h3M835 411.5h1M856 411.5h1M35 432.5h1M56 432.5h1M77 432.5h1M98 432.5h1M119 432.5h1M140 432.5h1M161 432.5h1M181 432.5h3M203 432.5h1M224 432.5h1M245 432.5h1M267 432.5h1M288 432.5h1M309 432.5h1M330 432.5h1M351 432.5h1M372 432.5h1M392 432.5h3M414 432.5h1M435 432.5h1M456 432.5h1M477 432.5h1M498 432.5h1M519 432.5h1M540 432.5h1M561 432.5h1M582 432.5h1M602 432.5h3M624 432.5h1M645 432.5h1M666 432.5h1M688 432.5h1M709 432.5h1M730 432.5h1M751 432.5h1M772 432.5h1M793 432.5h1M813 432.5h3M835 432.5h1M856 432.5h1M35 453.5h1M56 453.5h1M77 453.5h1M98 453.5h1M119 453.5h1M140 453.5h1M161 453.5h1M181 453.5h3M203 453.5h1M224 453.5h1M245 453.5h1M267 453.5h1M288 453.5h1M309 453.5h1M330 453.5h1M351 453.5h1M372 453.5h1M392 453.5h3M414 453.5h1M435 453.5h1M456 453.5h1M477 453.5h1M498 453.5h1M519 453.5h1M540 453.5h1M561 453.5h1M582 453.5h1M602 453.5h3M624 453.5h1M645 453.5h1M666 453.5h1M688 453.5h1M709 453.5h1M730 453.5h1M751 453.5h1M772 453.5h1M793 453.5h1M813 453.5h3M835 453.5h1M856 453.5h1M35 474.5h1M56 474.5h1M77 474.5h1M98 474.5h1M119 474.5h1M140 474.5h1M161 474.5h1M181 474.5h3M203 474.5h1M224 474.5h1M245 474.5h1M267 474.5h1M288 474.5h1M309 474.5h1M330 474.5h1M351 474.5h1M372 474.5h1M392 474.5h3M414 474.5h1M435 474.5h1M456 474.5h1M477 474.5h1M498 474.5h1M519 474.5h1M540 474.5h1M561 474.5h1M582 474.5h1M602 474.5h3M624 474.5h1M645 474.5h1M666 474.5h1M688 474.5h1M709 474.5h1M730 474.5h1M751 474.5h1M772 474.5h1M793 474.5h1M813 474.5h3M835 474.5h1M856 474.5h1M35.5 494v3M56.5 494v3M77.5 494v3M98.5 494v3M119.5 494v3M140.5 494v3M161.5 494v3M203.5 494v3M224.5 494v3M245.5 494v3M267.5 494v3M288.5 494v3M309.5 494v3M330.5 494v3M351.5 494v3M372.5 494v3M414.5 494v3M435.5 494v3M456.5 494v3M477.5 494v3M498.5 494v3M519.5 494v3M540.5 494v3M561.5 494v3M582.5 494v3M624.5 494v3M645.5 494v3M666.5 494v3M688.5 494v3M709.5 494v3M730.5 494v3M751.5 494v3M772.5 494v3M793.5 494v3M835.5 494v3M856.5 494v3M35 516.5h1M56 516.5h1M77 516.5h1M98 516.5h1M119 516.5h1M140 516.5h1M161 516.5h1M181 516.5h3M203 516.5h1M224 516.5h1M245 516.5h1M267 516.5h1M288 516.5h1M309 516.5h1M330 516.5h1M351 516.5h1M372 516.5h1M392 516.5h3M414 516.5h1M435 516.5h1M456 516.5h1M477 516.5h1M498 516.5h1M519 516.5h1M540 516.5h1M561 516.5h1M582 516.5h1M602 516.5h3M624 516.5h1M645 516.5h1M666 516.5h1M688 516.5h1M709 516.5h1M730 516.5h1M751 516.5h1M772 516.5h1M793 516.5h1M813 516.5h3M835 516.5h1M856 516.5h1M35 537.5h1M56 537.5h1M77 537.5h1M98 537.5h1M119 537.5h1M140 537.5h1M161 537.5h1M181 537.5h3M203 537.5h1M224 537.5h1M245 537.5h1M267 537.5h1M288 537.5h1M309 537.5h1M330 537.5h1M351 537.5h1M372 537.5h1M392 537.5h3M414 537.5h1M435 537.5h1M456 537.5h1M477 537.5h1M498 537.5h1M519 537.5h1M540 537.5h1M561 537.5h1M582 537.5h1M602 537.5h3M624 537.5h1M645 537.5h1M666 537.5h1M688 537.5h1M709 537.5h1M730 537.5h1M751 537.5h1M772 537.5h1M793 537.5h1M813 537.5h3M835 537.5h1M856 537.5h1M35 558.5h1M56 558.5h1M77 558.5h1M98 558.5h1M119 558.5h1M140 558.5h1M161 558.5h1M181 558.5h3M203 558.5h1M224 558.5h1M245 558.5h1M267 558.5h1M288 558.5h1M309 558.5h1M330 558.5h1M351 558.5h1M372 558.5h1M392 558.5h3M414 558.5h1M435 558.5h1M456 558.5h1M477 558.5h1M498 558.5h1M519 558.5h1M540 558.5h1M561 558.5h1M582 558.5h1M602 558.5h3M624 558.5h1M645 558.5h1M666 558.5h1M688 558.5h1M709 558.5h1M730 558.5h1M751 558.5h1M772 558.5h1M793 558.5h1M813 558.5h3M835 558.5h1M856 558.5h1M35 579.5h1M56 579.5h1M77 579.5h1M98 579.5h1M119 579.5h1M140 579.5h1M161 579.5h1M181 579.5h3M203 579.5h1M224 579.5h1M245 579.5h1M267 579.5h1M288 579.5h1M309 579.5h1M330 579.5h1M351 579.5h1M372 579.5h1M392 579.5h3M414 579.5h1M435 579.5h1M456 579.5h1M477 579.5h1M498 579.5h1M519 579.5h1M540 579.5h1M561 579.5h1M582 579.5h1M602 579.5h3M624 579.5h1M645 579.5h1M666 579.5h1M688 579.5h1M709 579.5h1M730 579.5h1M751 579.5h1M772 579.5h1M793 579.5h1M813 579.5h3M835 579.5h1M856 579.5h1M35 600.5h1M56 600.5h1M77 600.5h1M98 600.5h1M119 600.5h1M140 600.5h1M161 600.5h1M181 600.5h3M203 600.5h1M224 600.5h1M245 600.5h1M267 600.5h1M288 600.5h1M309 600.5h1M330 600.5h1M351 600.5h1M372 600.5h1M392 600.5h3M414 600.5h1M435 600.5h1M456 600.5h1M477 600.5h1M498 600.5h1M519 600.5h1M540 600.5h1M561 600.5h1M582 600.5h1M602 600.5h3M624 600.5h1M645 600.5h1M666 600.5h1M688 600.5h1M709 600.5h1M730 600.5h1M751 600.5h1M772 600.5h1M793 600.5h1M813 600.5h3M835 600.5h1M856 600.5h1M35 621.5h1M56 621.5h1M77 621.5h1M98 621.5h1M119 621.5h1M140 621.5h1M161 621.5h1M181 621.5h3M203 621.5h1M224 621.5h1M245 621.5h1M267 621.5h1M288 621.5h1M309 621.5h1M330 621.5h1M351 621.5h1M372 621.5h1M392 621.5h3M414 621.5h1M435 621.5h1M456 621.5h1M477 621.5h1M498 621.5h1M519 621.5h1M540 621.5h1M561 621.5h1M582 621.5h1M602 621.5h3M624 621.5h1M645 621.5h1M666 621.5h1M688 621.5h1M709 621.5h1M730 621.5h1M751 621.5h1M772 621.5h1M793 621.5h1M813 621.5h3M835 621.5h1M856 621.5h1M35 643.5h1M56 643.5h1M77 643.5h1M98 643.5h1M119 643.5h1M140 643.5h1M161 643.5h1M181 643.5h3M203 643.5h1M224 643.5h1M245 643.5h1M267 643.5h1M288 643.5h1M309 643.5h1M330 643.5h1M351 643.5h1M372 643.5h1M392 643.5h3M414 643.5h1M435 643.5h1M456 643.5h1M477 643.5h1M498 643.5h1M519 643.5h1M540 643.5h1M561 643.5h1M582 643.5h1M602 643.5h3M624 643.5h1M645 643.5h1M666 643.5h1M688 643.5h1M709 643.5h1M730 643.5h1M751 643.5h1M772 643.5h1M793 643.5h1M813 643.5h3M835 643.5h1M856 643.5h1M35 664.5h1M56 664.5h1M77 664.5h1M98 664.5h1M119 664.5h1M140 664.5h1M161 664.5h1M181 664.5h3M203 664.5h1M224 664.5h1M245 664.5h1M267 664.5h1M288 664.5h1M309 664.5h1M330 664.5h1M351 664.5h1M372 664.5h1M392 664.5h3M414 664.5h1M435 664.5h1M456 664.5h1M477 664.5h1M498 664.5h1M519 664.5h1M540 664.5h1M561 664.5h1M582 664.5h1M602 664.5h3M624 664.5h1M645 664.5h1M666 664.5h1M688 664.5h1M709 664.5h1M730 664.5h1M751 664.5h1M772 664.5h1M793 664.5h1M813 664.5h3M835 664.5h1M856 664.5h1M35 685.5h1M56 685.5h1M77 685.5h1M98 685.5h1M119 685.5h1M140 685.5h1M161 685.5h1M181 685.5h3M203 685.5h1M224 685.5h1M245 685.5h1M267 685.5h1M288 685.5h1M309 685.5h1M330 685.5h1M351 685.5h1M372 685.5h1M392 685.5h3M414 685.5h1M435 685.5h1M456 685.5h1M477 685.5h1M498 685.5h1M519 685.5h1M540 685.5h1M561 685.5h1M582 685.5h1M602 685.5h3M624 685.5h1M645 685.5h1M666 685.5h1M688 685.5h1M709 685.5h1M730 685.5h1M751 685.5h1M772 685.5h1M793 685.5h1M813 685.5h3M835 685.5h1M856 685.5h1" stroke="#8c8c8c" stroke-width="1" fill="none" shape-rendering="crispEdges"/>
<g stroke="#0d7686" stroke-width="1.4" fill="none">
<path d="M528.3 327.3L582.2 327.3M528.3 364.6L582.2 364.6M528.3 398.6L582.2 398.6M528.3 435.9L582.2 435.9M470.4 341.7L470.4 403.9M470.4 403.9L470.4 466.1M491.5 341.7L528.3 364.6M491.5 403.9L528.3 364.6M528.3 364.6L528.3 398.6M491.5 466.1L528.3 435.9M470.4 466.1L540.6 516.4M528.3 435.9L540.6 516.4"/></g>
<g stroke="#f584f0" stroke-width="1.3" fill="none"><circle cx="422.6" cy="337.9" r="22.6"/><circle cx="422.6" cy="391.8" r="22.6"/><circle cx="422.6" cy="445.7" r="22.6"/><circle cx="422.6" cy="499.7" r="22.6"/><rect x="454.5" y="315.5" width="53" height="53"/><rect x="454.5" y="377.5" width="53" height="53"/><rect x="454.5" y="439.5" width="53" height="53"/><rect x="516.5" y="315.5" width="78" height="62"/><rect x="516.5" y="386.5" width="78" height="62"/><rect x="516.5" y="457.5" width="70" height="76"/></g>
<g stroke="#ffffff" stroke-width="1.6" fill="none"><circle cx="422.6" cy="337.9" r="21.0" stroke="#a9b6d2"/><circle cx="422.6" cy="391.8" r="21.0" stroke="#a9b6d2"/><circle cx="422.6" cy="445.7" r="21.0" stroke="#a9b6d2"/><circle cx="422.6" cy="499.7" r="21.0" stroke="#a9b6d2"/><circle cx="480.9" cy="341.7" r="20.1"/><path d="M459.7 330.3A24.1 24.1 0 1 1 459.7 353.1Z"/><circle cx="480.9" cy="403.9" r="20.1"/><path d="M459.7 392.5A24.1 24.1 0 1 1 459.7 415.3Z"/><circle cx="480.9" cy="466.1" r="20.1"/><path d="M459.7 454.7A24.1 24.1 0 1 1 459.7 477.5Z"/><rect x="529.5" y="322.5" width="51" height="49"/><circle cx="555.3" cy="346.4" r="17.0"/><path d="M536 319.5H575M536 373.5H575M526.5 341.0V353.5M584.5 341.0V353.5"/><rect x="529.5" y="393.5" width="51" height="49"/><circle cx="555.3" cy="417.7" r="17.0"/><path d="M536 390.5H575M536 444.5H575M526.5 412.0V424.5M584.5 412.0V424.5"/><path d="M529.1 529.3H519.4V460.3H582.6V529.3H572.9" stroke-width="2.3"/><path d="M519.4 470.0H529.1V529.9M582.6 470.0H572.9V529.9M519.4 510.9H529.1M572.9 510.9H582.6M529.1 502.9H572.9" stroke-width="1.4"/><path d="M538.3 502.9V476.6a2.7 2.7 0 0 1 5.3 0V502.9"/><path d="M559.0 502.9V476.6a2.7 2.7 0 0 1 5.3 0V502.9"/><path d="M540.6 529.3L538.3 533.7H542.9Z" stroke-width="1"/></g>
<g stroke="#ff2ee6" stroke-width="1.6" fill="none">
<path d="M422.6 308.9L422.6 366.9M422.6 362.8L422.6 420.9M422.6 416.7L422.6 474.8M422.6 470.6L422.6 528.7M470.4 341.7L480.9 308.9M470.4 341.7L480.9 374.5M470.4 403.9L480.9 371.1M470.4 403.9L480.9 436.8M470.4 466.1L480.9 433.3M470.4 466.1L480.9 499.0M528.3 327.3L555.3 310.7M528.3 327.3L559.4 381.0M528.3 327.3L555.3 346.0M528.3 398.6L555.3 382.0M528.3 398.6L559.4 452.3M528.3 398.6L555.3 417.3M540.6 516.4L551.0 451.9M540.6 516.4L551.0 538.9M540.6 516.4L551.0 495.1"/></g>
<g><circle cx="422.6" cy="337.9" r="12" fill="none" stroke="#1fa9b9" stroke-width="1.1"/><circle cx="422.6" cy="337.9" r="10.6" fill="#e49c8c"/><circle cx="422.6" cy="337.9" r="10.1" fill="#9ae2ea"/><circle cx="422.6" cy="391.8" r="12" fill="none" stroke="#1fa9b9" stroke-width="1.1"/><circle cx="422.6" cy="391.8" r="10.6" fill="#e49c8c"/><circle cx="422.6" cy="391.8" r="10.1" fill="#9ae2ea"/><circle cx="422.6" cy="445.7" r="12" fill="none" stroke="#1fa9b9" stroke-width="1.1"/><circle cx="422.6" cy="445.7" r="10.6" fill="#e49c8c"/><circle cx="422.6" cy="445.7" r="10.1" fill="#9ae2ea"/><circle cx="422.6" cy="499.7" r="12" fill="none" stroke="#1fa9b9" stroke-width="1.1"/><circle cx="422.6" cy="499.7" r="10.6" fill="#e49c8c"/><circle cx="422.6" cy="499.7" r="10.1" fill="#9ae2ea"/><rect x="461.3" y="332.6" width="18.3" height="18.3" rx="1.5" fill="none" stroke="#d98c82" stroke-width="1"/><rect x="461.5" y="332.8" width="15.9" height="16.5" fill="#e3968b"/><circle cx="470.4" cy="341.7" r="5.7" fill="#fdf3cc"/><circle cx="470.4" cy="341.7" r="4.0" fill="#666d7b"/><text x="470.4" y="342.0" text-anchor="middle" font-family="DejaVu Sans, sans-serif" font-size="5" fill="#a9afba">1</text><rect x="468.8" y="343.3" width="3.2" height="0.9" fill="#8f96a3"/><ellipse cx="491.5" cy="341.7" rx="8.8" ry="8.8" fill="none" stroke="#c98077" stroke-width="1"/><ellipse cx="491.5" cy="341.7" rx="7.8" ry="7.8" fill="#e3968b"/><circle cx="491.5" cy="341.7" r="5.7" fill="#fdf3cc"/><circle cx="491.5" cy="341.7" r="4.0" fill="#666d7b"/><text x="491.5" y="342.0" text-anchor="middle" font-family="DejaVu Sans, sans-serif" font-size="5" fill="#a9afba">2</text><rect x="489.9" y="343.3" width="3.2" height="0.9" fill="#8f96a3"/><rect x="461.3" y="394.8" width="18.3" height="18.3" rx="1.5" fill="none" stroke="#d98c82" stroke-width="1"/><rect x="461.5" y="395.0" width="15.9" height="16.5" fill="#e3968b"/><circle cx="470.4" cy="403.9" r="5.7" fill="#fdf3cc"/><circle cx="470.4" cy="403.9" r="4.0" fill="#666d7b"/><text x="470.4" y="404.2" text-anchor="middle" font-family="DejaVu Sans, sans-serif" font-size="5" fill="#a9afba">1</text><rect x="468.8" y="405.5" width="3.2" height="0.9" fill="#8f96a3"/><ellipse cx="491.5" cy="403.9" rx="8.8" ry="8.8" fill="none" stroke="#c98077" stroke-width="1"/><ellipse cx="491.5" cy="403.9" rx="7.8" ry="7.8" fill="#e3968b"/><circle cx="491.5" cy="403.9" r="5.7" fill="#fdf3cc"/><circle cx="491.5" cy="403.9" r="4.0" fill="#666d7b"/><text x="491.5" y="404.2" text-anchor="middle" font-family="DejaVu Sans, sans-serif" font-size="5" fill="#a9afba">2</text><rect x="489.9" y="405.5" width="3.2" height="0.9" fill="#8f96a3"/><rect x="461.3" y="457.1" width="18.3" height="18.3" rx="1.5" fill="none" stroke="#d98c82" stroke-width="1"/><rect x="461.5" y="457.3" width="15.9" height="16.5" fill="#e3968b"/><circle cx="470.4" cy="466.1" r="5.7" fill="#fdf3cc"/><circle cx="470.4" cy="466.1" r="4.0" fill="#666d7b"/><text x="470.4" y="466.4" text-anchor="middle" font-family="DejaVu Sans, sans-serif" font-size="5" fill="#a9afba">1</text><rect x="468.8" y="467.7" width="3.2" height="0.9" fill="#8f96a3"/><ellipse cx="491.5" cy="466.1" rx="8.8" ry="8.8" fill="none" stroke="#c98077" stroke-width="1"/><ellipse cx="491.5" cy="466.1" rx="7.8" ry="7.8" fill="#e3968b"/><circle cx="491.5" cy="466.1" r="5.7" fill="#fdf3cc"/><circle cx="491.5" cy="466.1" r="4.0" fill="#666d7b"/><text x="491.5" y="466.4" text-anchor="middle" font-family="DejaVu Sans, sans-serif" font-size="5" fill="#a9afba">2</text><rect x="489.9" y="467.7" width="3.2" height="0.9" fill="#8f96a3"/><ellipse cx="528.3" cy="327.3" rx="9.6" ry="9.6" fill="none" stroke="#c98077" stroke-width="1"/><ellipse cx="528.3" cy="327.3" rx="8.6" ry="8.6" fill="#e3968b"/><circle cx="528.3" cy="327.3" r="6.6" fill="#fdf3cc"/><circle cx="528.3" cy="327.3" r="4.9" fill="#666d7b"/><text x="528.3" y="327.6" text-anchor="middle" font-family="DejaVu Sans, sans-serif" font-size="5" fill="#a9afba">1</text><rect x="526.7" y="328.9" width="3.2" height="0.9" fill="#8f96a3"/><ellipse cx="582.2" cy="327.3" rx="9.6" ry="9.6" fill="none" stroke="#c98077" stroke-width="1"/><ellipse cx="582.2" cy="327.3" rx="8.6" ry="8.6" fill="#e3968b"/><circle cx="582.2" cy="327.3" r="6.6" fill="#fdf3cc"/><circle cx="582.2" cy="327.3" r="4.9" fill="#666d7b"/><text x="582.2" y="327.6" text-anchor="middle" font-family="DejaVu Sans, sans-serif" font-size="5" fill="#a9afba">1</text><rect x="580.6" y="328.9" width="3.2" height="0.9" fill="#8f96a3"/><ellipse cx="528.3" cy="364.6" rx="9.6" ry="9.6" fill="none" stroke="#c98077" stroke-width="1"/><ellipse cx="528.3" cy="364.6" rx="8.6" ry="8.6" fill="#e3968b"/><circle cx="528.3" cy="364.6" r="6.6" fill="#fdf3cc"/><circle cx="528.3" cy="364.6" r="4.9" fill="#666d7b"/><text x="528.3" y="364.9" text-anchor="middle" font-family="DejaVu Sans, sans-serif" font-size="5" fill="#a9afba">2</text><rect x="526.7" y="366.2" width="3.2" height="0.9" fill="#8f96a3"/><ellipse cx="582.2" cy="364.6" rx="9.6" ry="9.6" fill="none" stroke="#c98077" stroke-width="1"/><ellipse cx="582.2" cy="364.6" rx="8.6" ry="8.6" fill="#e3968b"/><circle cx="582.2" cy="364.6" r="6.6" fill="#fdf3cc"/><circle cx="582.2" cy="364.6" r="4.9" fill="#666d7b"/><text x="582.2" y="364.9" text-anchor="middle" font-family="DejaVu Sans, sans-serif" font-size="5" fill="#a9afba">2</text><rect x="580.6" y="366.2" width="3.2" height="0.9" fill="#8f96a3"/><ellipse cx="528.3" cy="398.6" rx="9.6" ry="9.6" fill="none" stroke="#c98077" stroke-width="1"/><ellipse cx="528.3" cy="398.6" rx="8.6" ry="8.6" fill="#e3968b"/><circle cx="528.3" cy="398.6" r="6.6" fill="#fdf3cc"/><circle cx="528.3" cy="398.6" r="4.9" fill="#666d7b"/><text x="528.3" y="398.9" text-anchor="middle" font-family="DejaVu Sans, sans-serif" font-size="5" fill="#a9afba">1</text><rect x="526.7" y="400.2" width="3.2" height="0.9" fill="#8f96a3"/><ellipse cx="582.2" cy="398.6" rx="9.6" ry="9.6" fill="none" stroke="#c98077" stroke-width="1"/><ellipse cx="582.2" cy="398.6" rx="8.6" ry="8.6" fill="#e3968b"/><circle cx="582.2" cy="398.6" r="6.6" fill="#fdf3cc"/><circle cx="582.2" cy="398.6" r="4.9" fill="#666d7b"/><text x="582.2" y="398.9" text-anchor="middle" font-family="DejaVu Sans, sans-serif" font-size="5" fill="#a9afba">1</text><rect x="580.6" y="400.2" width="3.2" height="0.9" fill="#8f96a3"/><ellipse cx="528.3" cy="435.9" rx="9.6" ry="9.6" fill="none" stroke="#c98077" stroke-width="1"/><ellipse cx="528.3" cy="435.9" rx="8.6" ry="8.6" fill="#e3968b"/><circle cx="528.3" cy="435.9" r="6.6" fill="#fdf3cc"/><circle cx="528.3" cy="435.9" r="4.9" fill="#666d7b"/><text x="528.3" y="436.2" text-anchor="middle" font-family="DejaVu Sans, sans-serif" font-size="5" fill="#a9afba">2</text><rect x="526.7" y="437.5" width="3.2" height="0.9" fill="#8f96a3"/><ellipse cx="582.2" cy="435.9" rx="9.6" ry="9.6" fill="none" stroke="#c98077" stroke-width="1"/><ellipse cx="582.2" cy="435.9" rx="8.6" ry="8.6" fill="#e3968b"/><circle cx="582.2" cy="435.9" r="6.6" fill="#fdf3cc"/><circle cx="582.2" cy="435.9" r="4.9" fill="#666d7b"/><text x="582.2" y="436.2" text-anchor="middle" font-family="DejaVu Sans, sans-serif" font-size="5" fill="#a9afba">2</text><rect x="580.6" y="437.5" width="3.2" height="0.9" fill="#8f96a3"/><rect x="532.3" y="506.2" width="17.6" height="20.8" rx="2.6" fill="none" stroke="#d98c82" stroke-width="1"/><rect x="532.9" y="507.1" width="15" height="18.6" rx="2" fill="#e3968b"/><circle cx="540.6" cy="516.4" r="6.1" fill="#fdf3cc"/><circle cx="540.6" cy="516.4" r="4.4" fill="#666d7b"/><text x="540.6" y="516.7" text-anchor="middle" font-family="DejaVu Sans, sans-serif" font-size="5" fill="#a9afba">1</text><rect x="539.0" y="518.0" width="3.2" height="0.9" fill="#8f96a3"/><ellipse cx="561.3" cy="516.4" rx="8.4" ry="9.6" fill="none" stroke="#c98077" stroke-width="1"/><ellipse cx="561.3" cy="516.4" rx="7.4" ry="8.6" fill="#e3968b"/><circle cx="561.3" cy="516.4" r="6.1" fill="#fdf3cc"/><circle cx="561.3" cy="516.4" r="4.4" fill="#666d7b"/><text x="561.3" y="516.7" text-anchor="middle" font-family="DejaVu Sans, sans-serif" font-size="5" fill="#a9afba">2</text><rect x="559.7" y="518.0" width="3.2" height="0.9" fill="#8f96a3"/></g>
<g stroke="#fff" stroke-width="0.25"><text x="422.6" y="313.2" text-anchor="middle" font-family="DejaVu Sans, sans-serif" font-size="11.9" fill="#ffffff" textLength="13.9" lengthAdjust="spacingAndGlyphs">H1</text><text x="422.6" y="371.3" text-anchor="middle" font-family="DejaVu Sans, sans-serif" font-size="11.9" fill="#ffffff" textLength="81.2" lengthAdjust="spacingAndGlyphs">MountingHole</text><text x="422.6" y="367.1" text-anchor="middle" font-family="DejaVu Sans, sans-serif" font-size="11.9" fill="#ffffff" textLength="13.9" lengthAdjust="spacingAndGlyphs">H2</text><text x="422.6" y="425.2" text-anchor="middle" font-family="DejaVu Sans, sans-serif" font-size="11.9" fill="#ffffff" textLength="81.2" lengthAdjust="spacingAndGlyphs">MountingHole</text><text x="422.6" y="421.1" text-anchor="middle" font-family="DejaVu Sans, sans-serif" font-size="11.9" fill="#ffffff" textLength="13.9" lengthAdjust="spacingAndGlyphs">H3</text><text x="422.6" y="479.1" text-anchor="middle" font-family="DejaVu Sans, sans-serif" font-size="11.9" fill="#ffffff" textLength="81.2" lengthAdjust="spacingAndGlyphs">MountingHole</text><text x="422.6" y="475.0" text-anchor="middle" font-family="DejaVu Sans, sans-serif" font-size="11.9" fill="#ffffff" textLength="13.9" lengthAdjust="spacingAndGlyphs">H4</text><text x="422.6" y="533.0" text-anchor="middle" font-family="DejaVu Sans, sans-serif" font-size="11.9" fill="#ffffff" textLength="81.2" lengthAdjust="spacingAndGlyphs">MountingHole</text><text x="480.9" y="313.2" text-anchor="middle" font-family="DejaVu Sans, sans-serif" font-size="11.9" fill="#ffffff" textLength="14.2" lengthAdjust="spacingAndGlyphs">D1</text><text x="480.9" y="378.9" text-anchor="middle" font-family="DejaVu Sans, sans-serif" font-size="11.9" fill="#ffffff" textLength="20.4" lengthAdjust="spacingAndGlyphs">LED</text><text x="480.9" y="375.4" text-anchor="middle" font-family="DejaVu Sans, sans-serif" font-size="11.9" fill="#ffffff" textLength="14.2" lengthAdjust="spacingAndGlyphs">D2</text><text x="480.9" y="441.1" text-anchor="middle" font-family="DejaVu Sans, sans-serif" font-size="11.9" fill="#ffffff" textLength="20.4" lengthAdjust="spacingAndGlyphs">LED</text><text x="480.9" y="437.6" text-anchor="middle" font-family="DejaVu Sans, sans-serif" font-size="11.9" fill="#ffffff" textLength="14.2" lengthAdjust="spacingAndGlyphs">D3</text><text x="480.9" y="503.3" text-anchor="middle" font-family="DejaVu Sans, sans-serif" font-size="11.9" fill="#ffffff" textLength="20.4" lengthAdjust="spacingAndGlyphs">LED</text><text x="555.3" y="315.1" text-anchor="middle" font-family="DejaVu Sans, sans-serif" font-size="11.9" fill="#ffffff" textLength="23.2" lengthAdjust="spacingAndGlyphs">SW1</text><text x="559.4" y="385.4" text-anchor="middle" font-family="DejaVu Sans, sans-serif" font-size="11.9" fill="#ffffff" textLength="51.3" lengthAdjust="spacingAndGlyphs">SW_Push</text><text x="555.3" y="350.3" text-anchor="middle" font-family="DejaVu Sans, sans-serif" font-size="11.9" fill="#ffffff" textLength="23.2" lengthAdjust="spacingAndGlyphs">SW1</text><text x="555.3" y="386.4" text-anchor="middle" font-family="DejaVu Sans, sans-serif" font-size="11.9" fill="#ffffff" textLength="23.2" lengthAdjust="spacingAndGlyphs">SW2</text><text x="559.4" y="456.7" text-anchor="middle" font-family="DejaVu Sans, sans-serif" font-size="11.9" fill="#ffffff" textLength="51.3" lengthAdjust="spacingAndGlyphs">SW_Push</text><text x="555.3" y="421.6" text-anchor="middle" font-family="DejaVu Sans, sans-serif" font-size="11.9" fill="#ffffff" textLength="23.2" lengthAdjust="spacingAndGlyphs">SW2</text><text x="551.3" y="455.8" text-anchor="middle" font-family="DejaVu Sans, sans-serif" font-size="11.9" fill="#ffffff" textLength="18.9" lengthAdjust="spacingAndGlyphs">BT1</text><text x="552.0" y="543.0" text-anchor="middle" font-family="DejaVu Sans, sans-serif" font-size="11.9" fill="#ffffff" textLength="42.2" lengthAdjust="spacingAndGlyphs">Battery</text><text x="551.3" y="499.2" text-anchor="middle" font-family="DejaVu Sans, sans-serif" font-size="11.9" fill="#ffffff" textLength="18.9" lengthAdjust="spacingAndGlyphs">BT1</text></g>
</svg></div>
</body></html>
